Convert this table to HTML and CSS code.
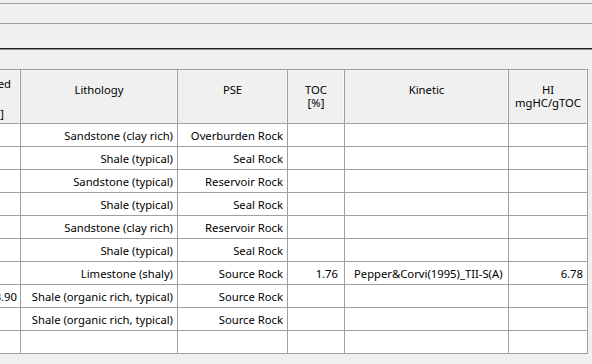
FILE: index.html
```html
<!DOCTYPE html>
<html>
<head>
<meta charset="utf-8">
<link rel="stylesheet" href="styles.css">
</head>
<body>
<div class="panel">
  <div class="bar bar-top"></div>
  <div class="bar bar-mid"></div>
  <div class="bar bar-dark"></div>
  <div class="bar bar-low"></div>
  <div class="table">
    <div class="row head">
      <div class="cell c1 h1"><span class="l1">ed</span><span class="l2">&nbsp;</span><span class="l3">]</span></div>
      <div class="cell c2"><span>Lithology</span><span>&nbsp;</span></div>
      <div class="cell c3"><span>PSE</span><span>&nbsp;</span></div>
      <div class="cell c4"><span>TOC</span><span>[%]</span></div>
      <div class="cell c5"><span>Kinetic</span><span>&nbsp;</span></div>
      <div class="cell c6"><span>HI</span><span>mgHC/gTOC</span></div>
    </div>
    <div class="row">
      <div class="cell c1"></div>
      <div class="cell c2">Sandstone (clay rich)</div>
      <div class="cell c3">Overburden Rock</div>
      <div class="cell c4"></div>
      <div class="cell c5"></div>
      <div class="cell c6"></div>
    </div>
    <div class="row">
      <div class="cell c1"></div>
      <div class="cell c2">Shale (typical)</div>
      <div class="cell c3">Seal Rock</div>
      <div class="cell c4"></div>
      <div class="cell c5"></div>
      <div class="cell c6"></div>
    </div>
    <div class="row">
      <div class="cell c1"></div>
      <div class="cell c2">Sandstone (typical)</div>
      <div class="cell c3">Reservoir Rock</div>
      <div class="cell c4"></div>
      <div class="cell c5"></div>
      <div class="cell c6"></div>
    </div>
    <div class="row">
      <div class="cell c1"></div>
      <div class="cell c2">Shale (typical)</div>
      <div class="cell c3">Seal Rock</div>
      <div class="cell c4"></div>
      <div class="cell c5"></div>
      <div class="cell c6"></div>
    </div>
    <div class="row">
      <div class="cell c1"></div>
      <div class="cell c2">Sandstone (clay rich)</div>
      <div class="cell c3">Reservoir Rock</div>
      <div class="cell c4"></div>
      <div class="cell c5"></div>
      <div class="cell c6"></div>
    </div>
    <div class="row">
      <div class="cell c1"></div>
      <div class="cell c2">Shale (typical)</div>
      <div class="cell c3">Seal Rock</div>
      <div class="cell c4"></div>
      <div class="cell c5"></div>
      <div class="cell c6"></div>
    </div>
    <div class="row">
      <div class="cell c1"></div>
      <div class="cell c2">Limestone (shaly)</div>
      <div class="cell c3">Source Rock</div>
      <div class="cell c4">1.76</div>
      <div class="cell c5">Pepper&amp;Corvi(1995)_TII-S(A)</div>
      <div class="cell c6">6.78</div>
    </div>
    <div class="row">
      <div class="cell c1">3.90</div>
      <div class="cell c2">Shale (organic rich, typical)</div>
      <div class="cell c3">Source Rock</div>
      <div class="cell c4"></div>
      <div class="cell c5"></div>
      <div class="cell c6"></div>
    </div>
    <div class="row">
      <div class="cell c1"></div>
      <div class="cell c2">Shale (organic rich, typical)</div>
      <div class="cell c3">Source Rock</div>
      <div class="cell c4"></div>
      <div class="cell c5"></div>
      <div class="cell c6"></div>
    </div>
    <div class="row">
      <div class="cell c1"></div>
      <div class="cell c2"></div>
      <div class="cell c3"></div>
      <div class="cell c4"></div>
      <div class="cell c5"></div>
      <div class="cell c6"></div>
    </div>
  </div>
</div>
</body>
</html>
```
FILE: styles.css
```css
html, body {
  margin: 0;
  padding: 0;
  background: #f0f0f0;
}
body {
  width: 592px;
  height: 364px;
  overflow: hidden;
  font-family: "Noto Sans", "Open Sans", sans-serif;
  font-size: 11.25px;
  color: #000;
}
.panel {
  display: flex;
  flex-direction: column;
}
.bar {
  background: #f0f0f0;
}
.bar-top {
  height: 3px;
  border-bottom: 1px solid #a0a0a0;
}
.bar-mid {
  height: 19px;
  border-bottom: 1px solid #a0a0a0;
}
.bar-dark {
  height: 24px;
  border-bottom: 1px solid #1e1e1e;
}
.bar-low {
  height: 19px;
  border-top: 1px solid #8c8c8c;
}
.table {
  display: flex;
  flex-direction: column;
  width: 588px;
  border-top: 1px solid #a0a0a0;
}
.row {
  display: grid;
  grid-template-columns: 21px 157px 110px 57px 164px 79px;
  height: 23px;
}
.cell {
  box-sizing: border-box;
  border-right: 1px solid #a0a0a0;
  border-bottom: 1px solid #a0a0a0;
  background: #fff;
  display: flex;
  align-items: center;
  justify-content: flex-end;
  padding-right: 4px;
  white-space: nowrap;
  overflow: hidden;
  min-width: 0;
}
.row .c1 {
  padding-right: 3px;
}
.row .c4 {
  padding-right: 6px;
}
.row .c5 {
  justify-content: flex-start;
  padding-left: 9px;
}
.row .c6 {
  padding-right: 4px;
}
.head {
  height: 54px;
}
.head .cell {
  background: #f0f0f0;
  flex-direction: column;
  justify-content: center;
  align-items: center;
  padding: 0 2px 1px 2px;
  line-height: 13.5px;
  box-shadow: inset -1px 0 0 #f8f8f8;
}
.head .c5 {
  justify-content: center;
  padding-left: 2px;
}
.head .h1 {
  align-items: flex-end;
  line-height: 15px;
  padding: 4px 0 0 0;
}
.head .h1 .l1 {
  padding-right: 9px;
}
.head .h1 .l3 {
  padding-right: 16px;
}
```
